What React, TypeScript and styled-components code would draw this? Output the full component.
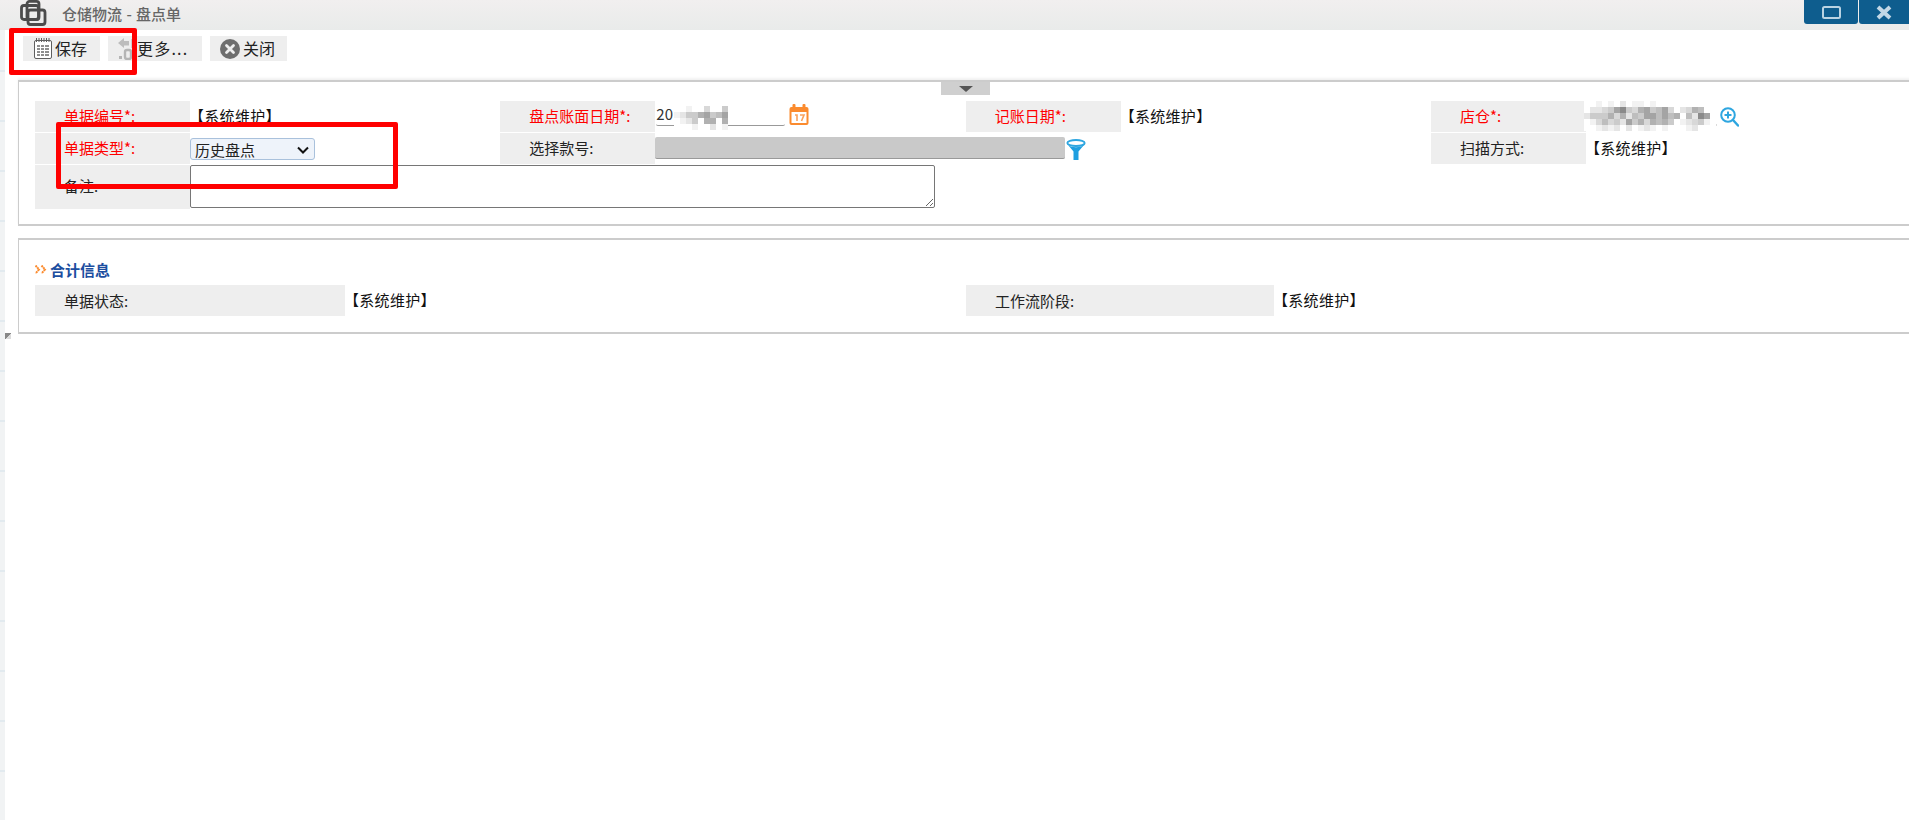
import styled, { createGlobalStyle } from "styled-components";

const GlobalStyle = createGlobalStyle`
  html, body {
    margin: 0;
    padding: 0;
    background: #fff;
    overflow: hidden;
    font-family: "Noto Sans CJK SC", "Liberation Sans", sans-serif;
    font-size: 15px;
    color: #222;
  }
  * { box-sizing: border-box; }
`;

const TitleIcon = () => (
  <svg width="27" height="26" viewBox="0 0 27 26" fill="none" stroke="#4c4c4c" strokeWidth="2.8">
    <rect x="1.5" y="5.5" width="17" height="14" rx="2.5" />
    <rect x="7" y="1.4" width="12" height="18" rx="2.5" />
    <rect x="8" y="10" width="17" height="14.5" rx="2.5" />
  </svg>
);

const SaveIcon = () => (
  <svg width="18" height="21" viewBox="0 0 18 21" fill="none">
    <rect x="0.5" y="2.5" width="17" height="18" rx="1.5" stroke="#5e5e5e" fill="#fff" />
    <path d="M2.5 0v4M5 0v4M7.5 0v4M10 0v4M12.5 0v4M15 0v4" stroke="#5e5e5e" />
    <path d="M3 8h3M7 8h3M11 8h4M3 11h3M7 11h3M11 11h4M3 14h3M7 14h3M11 14h4M3 17h3M7 17h3M11 17h4" stroke="#6a6a6a" strokeWidth="1.7" />
  </svg>
);

const MoreIcon = () => (
  <svg width="16" height="22" viewBox="0 0 16 22">
    <path d="M0 5l6-5v3h5v4.5H6V10z" fill="#bdbdbd" />
    <rect x="13" y="1" width="3" height="9" fill="#cfcfcf" />
    <rect x="1" y="18" width="3" height="3" fill="#b5b5b5" />
    <rect x="7" y="12" width="6" height="9" rx="2" fill="none" stroke="#b5b5b5" strokeWidth="2.4" />
    <rect x="15" y="12" width="1" height="9" fill="#b5b5b5" />
  </svg>
);

const CloseIcon = () => (
  <svg width="20" height="20" viewBox="0 0 20 20">
    <circle cx="10" cy="10" r="10" fill="#6e6e6e" />
    <path d="M6.5 6.5l7 7M13.5 6.5l-7 7" stroke="#eee" strokeWidth="2.8" strokeLinecap="round" />
  </svg>
);

const CalendarIcon = () => (
  <svg width="20" height="21" viewBox="0 0 20 21">
    <rect x="0.5" y="3" width="19" height="18" rx="2" fill="#fb8b2e" />
    <rect x="2.5" y="8" width="15" height="11" fill="#fff" />
    <rect x="3.5" y="0" width="3" height="5" rx="1" fill="#fb8b2e" />
    <rect x="13.5" y="0" width="3" height="5" rx="1" fill="#fb8b2e" />
    <path d="M6 11h2v6M11 11h4l-2.5 6" fill="none" stroke="#f9a25c" strokeWidth="1.6" />
  </svg>
);

const FilterIcon = () => (
  <svg width="20" height="21" viewBox="0 0 20 21">
    <ellipse cx="10" cy="4" rx="8.7" ry="3" fill="#fff" stroke="#2ea6e0" strokeWidth="1.8" />
    <path d="M2 6l5.5 6.5V21h5v-8.5L18 6c-4 3-12 3-16 0z" fill="#1f9fe0" />
  </svg>
);

const ZoomIcon = () => (
  <svg width="19" height="20" viewBox="0 0 19 20" fill="none" stroke="#2ea6e0">
    <circle cx="8" cy="8" r="6.8" strokeWidth="2" />
    <path d="M13 13l5 5.5" strokeWidth="2.4" strokeLinecap="round" />
    <path d="M4.5 8h7M8 4.5v7" strokeWidth="2" />
  </svg>
);

const HeadingMark = () => (
  <svg width="12" height="9" viewBox="0 0 12 9" fill="none" stroke="#fb8b2e" strokeWidth="2" strokeDasharray="2 0.6">
    <path d="M0.5 0.5L4 4.5L0.5 8.5" />
    <path d="M6.5 0.5L10 4.5L6.5 8.5" />
  </svg>
);

const Mosaic = ({ rows, cell }: { rows: string[]; cell: number }) => (
  <svg width={rows[0].length * cell} height={rows.length * cell}>
    {rows.map((row, y) =>
      row.split("").map((c, x) => {
        const v = 255 - parseInt(c, 16) * 13;
        return <rect key={`${x}-${y}`} x={x * cell} y={y * cell} width={cell} height={cell} fill={`rgb(${v},${v},${v})`} />;
      })
    )}
  </svg>
);

const dateMosaic = ["001003004", "124467457", "012406606", "000100201"];
const storeMosaic = [
  "0010102011010000000000",
  "0223479436745730236500",
  "2444636254775756052970",
  "0135342746365640123410",
  "0012120201210100012000",
];

export default function App() {
  return (
    <Page>
      <GlobalStyle />
      <TitleBar>
        <TitleLogo>
          <TitleIcon />
        </TitleLogo>
        <TitleText>仓储物流 - 盘点单</TitleText>
        <WindowButtons>
          <WindowButton>
            <svg width="19" height="13" viewBox="0 0 19 13" fill="none">
              <rect x="1" y="1" width="17" height="11" rx="1.5" stroke="#b9d3e3" strokeWidth="2" />
            </svg>
          </WindowButton>
          <WindowButton>
            <svg width="16" height="15" viewBox="0 0 16 15">
              <path d="M2 2l12 11M14 2L2 13" stroke="#c3d8e6" strokeWidth="4" />
            </svg>
          </WindowButton>
        </WindowButtons>
      </TitleBar>
      <Body>
        <Rail>
          <RailCorner />
        </Rail>
        <Main>
          <Toolbar>
            <ToolButton $width={77} $pad={11}>
              <SaveIcon />
              <ToolText>保存</ToolText>
            </ToolButton>
            <ToolButton $width={94} $pad={10}>
              <MoreIcon />
              <ToolText $spaced>更多...</ToolText>
            </ToolButton>
            <ToolButton $width={77} $pad={10}>
              <CloseIcon />
              <ToolText>关闭</ToolText>
            </ToolButton>
          </Toolbar>

          <HeaderPanel>
            <CollapseTab>
              <CollapseArrow />
            </CollapseTab>
            <FormGrid>
              <Label $required>单据编号*:</Label>
              <PlainValue>【系统维护】</PlainValue>
              <Label $required>盘点账面日期*:</Label>
              <Value>
                <UnderlineField $width={129} defaultValue="20" readOnly />
                <MosaicSpot $left={19} $top={5}>
                  <Mosaic rows={dateMosaic} cell={6} />
                </MosaicSpot>
                <IconSlot $left={134} $top={3}>
                  <CalendarIcon />
                </IconSlot>
              </Value>
              <Label $required>记账日期*:</Label>
              <PlainValue>【系统维护】</PlainValue>
              <Label $required>店仓*:</Label>
              <Value>
                <UnderlineField $width={130} readOnly />
                <MosaicSpot $left={-2} $top={0}>
                  <Mosaic rows={storeMosaic} cell={6} />
                </MosaicSpot>
                <IconSlot $left={134} $top={6}>
                  <ZoomIcon />
                </IconSlot>
              </Value>

              <Label $required>单据类型*:</Label>
              <FieldValue>
                <TypeSelect defaultValue="history">
                  <option value="history">历史盘点</option>
                </TypeSelect>
              </FieldValue>
              <Label>选择款号:</Label>
              <WideValue>
                <DisabledField disabled />
                <IconSlot $left={411} $top={6}>
                  <FilterIcon />
                </IconSlot>
              </WideValue>
              <Label>扫描方式:</Label>
              <PlainValue>【系统维护】</PlainValue>

              <Label $tall>备注:</Label>
              <NoteCell>
                <NoteArea />
              </NoteCell>
            </FormGrid>
          </HeaderPanel>

          <SummaryPanel>
            <Heading>
              <HeadingMark />
              <span>合计信息</span>
            </Heading>
            <SummaryGrid>
              <Label $flush>单据状态:</Label>
              <PlainValue>【系统维护】</PlainValue>
              <Label $flush>工作流阶段:</Label>
              <PlainValue>【系统维护】</PlainValue>
            </SummaryGrid>
          </SummaryPanel>
        </Main>
      </Body>
      <RedFrame $left={9} $top={28} $width={128} $height={47} />
      <RedFrame $left={56} $top={122} $width={342} $height={67} />
    </Page>
  );
}

const Page = styled.div`
  position: relative;
  width: 1909px;
  height: 820px;
  overflow: hidden;
  display: flex;
  flex-direction: column;
`;

const TitleBar = styled.div`
  height: 30px;
  flex: none;
  display: flex;
  align-items: flex-start;
  padding-left: 20px;
  background: linear-gradient(#f1efef, #e9ebea);
`;

const TitleLogo = styled.div`
  width: 27px;
  height: 26px;
  display: flex;
`;

const TitleText = styled.div`
  margin-left: 15px;
  margin-top: 4px;
  font-size: 15px;
  line-height: 20px;
  font-weight: 500;
  word-spacing: 1px;
  color: #666;
`;

const WindowButtons = styled.div`
  margin-left: auto;
  display: flex;
  gap: 1px;
`;

const WindowButton = styled.div`
  width: 54px;
  height: 24px;
  display: flex;
  align-items: center;
  justify-content: center;
  background: #0e5d8e;
  border-radius: 0 0 3px 3px;

  &:last-child {
    width: 50px;
    border-radius: 0 0 0 3px;
  }
`;

const Body = styled.div`
  flex: 1;
  display: flex;
`;

const Rail = styled.div`
  position: relative;
  width: 5px;
  flex: none;
  background-color: #f1f3f4;
  background-image: repeating-linear-gradient(#f1f3f4 0 40px, #e2eaef 40px 42px, #f1f3f4 42px 50px);
`;

const RailCorner = styled.div`
  position: absolute;
  left: 5px;
  top: 303px;
  width: 6px;
  height: 6px;
  background: linear-gradient(135deg, #888 50%, #ddd 50%);
`;

const Main = styled.div`
  flex: 1;
  min-width: 0;
  padding-left: 13px;
  display: flex;
  flex-direction: column;
`;

const Toolbar = styled.div`
  height: 50px;
  flex: none;
  display: flex;
  gap: 8px;
  padding: 6px 0 0 5px;
`;

const ToolButton = styled.div<{ $width: number; $pad: number }>`
  width: ${(p) => p.$width}px;
  height: 25px;
  padding-left: ${(p) => p.$pad}px;
  display: flex;
  align-items: center;
  background: #eee;
`;

const ToolText = styled.span<{ $spaced?: boolean }>`
  margin-left: 3px;
  margin-top: -2px;
  font-size: 16px;
  line-height: 22px;
  white-space: nowrap;
  color: #222;
  letter-spacing: ${(p) => (p.$spaced ? "1.2px" : "0")};
`;

const HeaderPanel = styled.div`
  position: relative;
  width: 1900px;
  height: 146px;
  flex: none;
  padding: 19px 0 0 16px;
  border: 1px solid #ccc;
  border-bottom-width: 2px;
  border-top-width: 2px;
  box-shadow: 0 -2px 2px #f2f2f2;
`;

const CollapseTab = styled.div`
  position: absolute;
  left: 922px;
  top: 0;
  width: 49px;
  height: 13px;
  display: flex;
  align-items: center;
  justify-content: center;
  background: #cfcfcf;
`;

const CollapseArrow = styled.div`
  width: 0;
  height: 0;
  border-style: solid;
  border-width: 6px 7px 0 7px;
  border-color: #555 transparent transparent transparent;
`;

const FormGrid = styled.div`
  display: grid;
  grid-template-columns: repeat(4, 155px 310.33px);
  grid-template-rows: 31px 31px 44px;
  row-gap: 1px;
`;

const Label = styled.div<{ $required?: boolean; $tall?: boolean; $flush?: boolean }>`
  display: flex;
  align-items: ${(p) => (p.$tall ? "flex-end" : "center")};
  padding-left: 29px;
  padding-bottom: ${(p) => (p.$tall ? "13px" : p.$flush ? "0" : "2px")};
  background: #eee;
  font-size: 15px;
  white-space: nowrap;
  color: ${(p) => (p.$required ? "#ff0000" : "#222")};
`;

const PlainValue = styled.div`
  display: flex;
  align-items: center;
  padding-bottom: 2px;
  margin-left: -1px;
  font-size: 15px;
  letter-spacing: 0.3px;
  white-space: nowrap;
  color: #111;
`;

const Value = styled.div`
  position: relative;
  display: flex;
  align-items: center;
  padding-left: 1px;
`;

const FieldValue = styled(Value)`
  padding-left: 0;
`;

const WideValue = styled(Value)`
  grid-column: span 3;
  padding-left: 0;
`;

const UnderlineField = styled.input<{ $width: number }>`
  width: ${(p) => p.$width}px;
  height: 24px;
  margin-top: -5px;
  padding: 0 0 0 0;
  border: none;
  border-bottom: 1px solid #999;
  border-radius: 0 0 2px 2px;
  outline: none;
  background: transparent;
  font-family: inherit;
  font-size: 15px;
  color: #333;
`;

const MosaicSpot = styled.div<{ $left: number; $top: number }>`
  position: absolute;
  left: ${(p) => p.$left}px;
  top: ${(p) => p.$top}px;
  display: flex;
`;

const IconSlot = styled.div<{ $left: number; $top: number }>`
  position: absolute;
  left: ${(p) => p.$left}px;
  top: ${(p) => p.$top}px;
  display: flex;
`;

const TypeSelect = styled.select`
  appearance: none;
  width: 125px;
  height: 22px;
  margin-top: 1px;
  padding: 0 0 0 4px;
  border: 1px solid #a9c1dc;
  border-radius: 3px;
  background: #eef3fa url("data:image/svg+xml,%3Csvg xmlns='http://www.w3.org/2000/svg' width='12' height='8'%3E%3Cpath d='M1 1.5l5 5 5-5' fill='none' stroke='%23111' stroke-width='2'/%3E%3C/svg%3E") no-repeat 106px 7px;
  font-family: inherit;
  font-size: 15px;
  color: #222;
`;

const DisabledField = styled.input`
  width: 410px;
  height: 22px;
  margin-top: -1px;
  border: none;
  border-bottom: 1px solid #999;
  border-radius: 2px;
  background: #c9c9c9;
`;

const NoteCell = styled.div`
  grid-column: 2 / span 3;
`;

const NoteArea = styled.textarea`
  display: block;
  width: 745px;
  height: 43px;
  margin: 0;
  border: 1px solid #767676;
  border-radius: 2px;
  outline: none;
  font-family: inherit;
`;

const SummaryPanel = styled.div`
  width: 1900px;
  height: 96px;
  flex: none;
  margin-top: 12px;
  padding: 17px 0 0 16px;
  border: 1px solid #ccc;
  border-top-width: 2px;
  border-bottom-width: 2px;
`;

const Heading = styled.div`
  height: 24px;
  margin-bottom: 4px;
  display: flex;
  align-items: center;
  gap: 3px;
  font-size: 15px;
  font-weight: 700;
  color: #1c4ea0;
`;

const SummaryGrid = styled.div`
  display: grid;
  grid-template-columns: 310px 621px 308px 1fr;
  height: 31px;
`;

const RedFrame = styled.div<{ $left: number; $top: number; $width: number; $height: number }>`
  position: absolute;
  left: ${(p) => p.$left}px;
  top: ${(p) => p.$top}px;
  width: ${(p) => p.$width}px;
  height: ${(p) => p.$height}px;
  border: 5px solid #ff0000;
  border-radius: 2px;
  pointer-events: none;
`;
